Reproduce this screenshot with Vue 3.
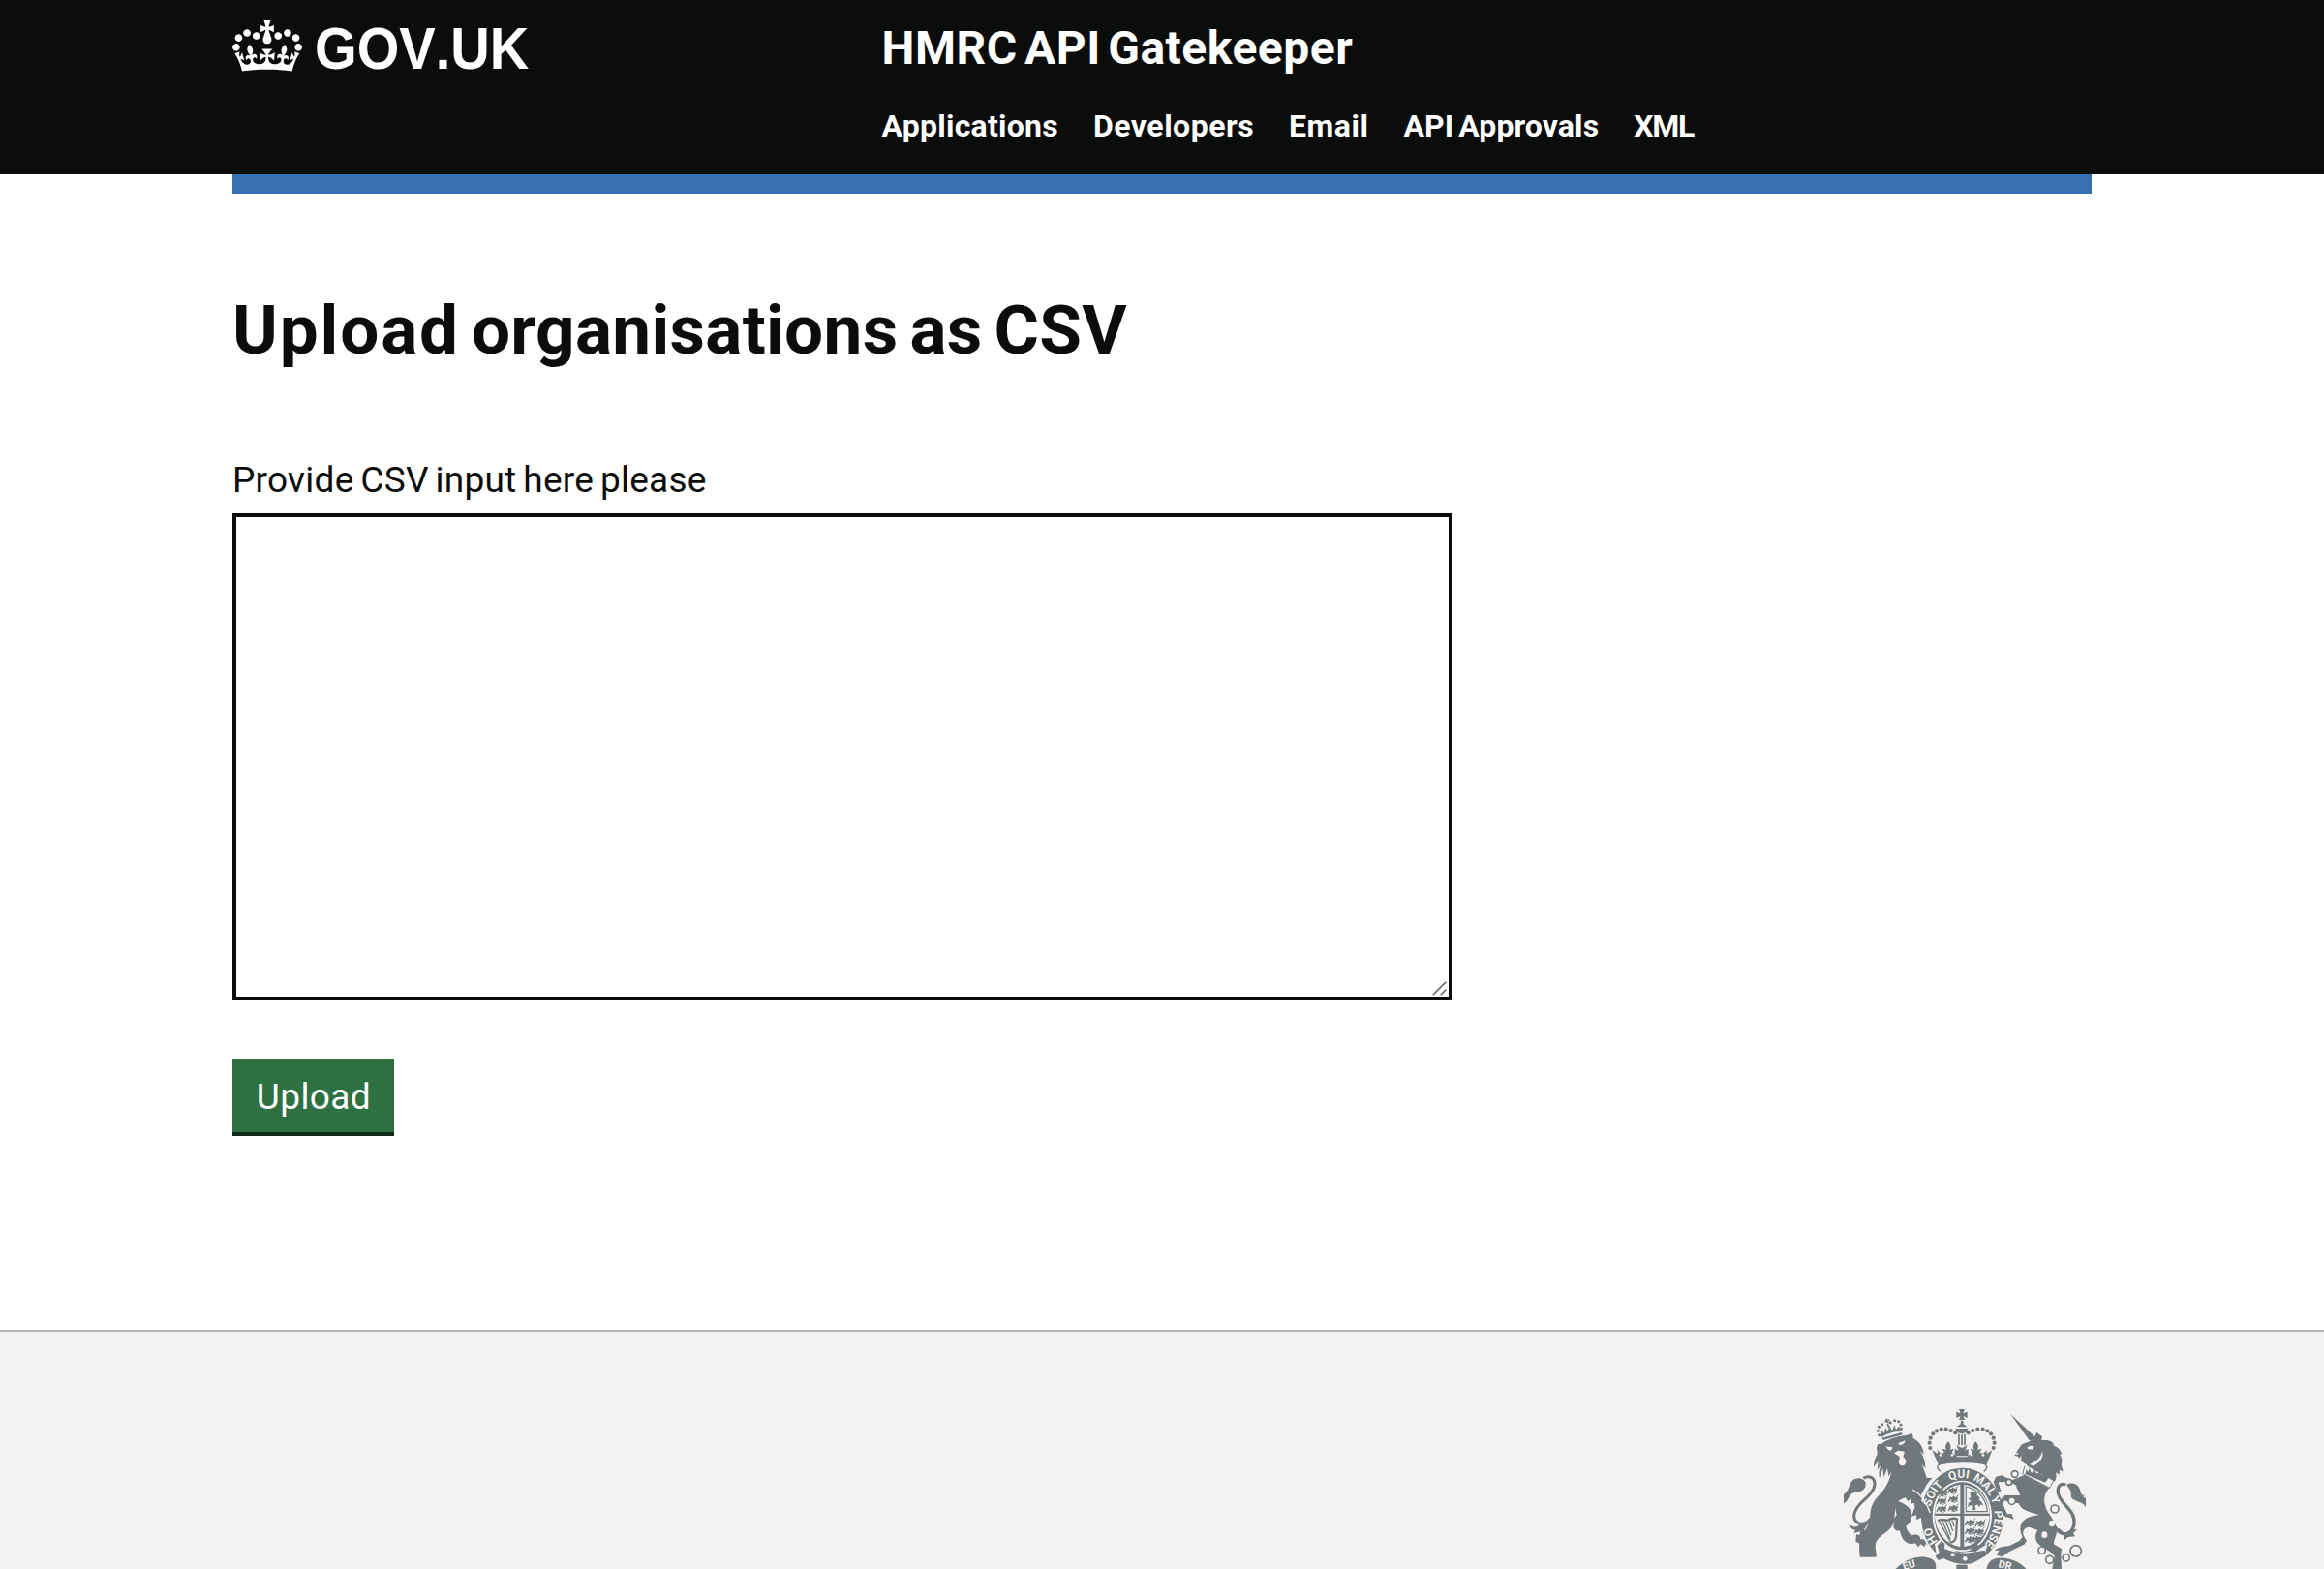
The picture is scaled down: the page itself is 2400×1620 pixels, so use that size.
<script setup>
const navigation = ['Applications', 'Developers', 'Email', 'API Approvals', 'XML']

const motto = [
  { word: 'HO', at: '16.5%' },
  { word: 'SOIT', at: '35%' },
  { word: 'QUI', at: '48.6%' },
  { word: 'MAL', at: '60.2%' },
  { word: 'Y', at: '68%' },
  { word: 'PENSE', at: '80.5%' },
]

const crownPearls = [
  [40, 135], [38, 119], [41, 104], [49, 91], [60, 82], [74, 77], [89, 77], [104, 81], [118, 88],
  [158, 88], [172, 81], [187, 77], [203, 77], [217, 82], [228, 91], [236, 104], [239, 119], [236, 135],
]

const lionPearls = [[152, 365], [148, 352], [151, 340], [161, 332], [186, 326], [200, 320], [212, 323], [219, 333], [220, 346]]

const passant = [[66, 264], [96, 256], [62, 289], [98, 283], [62, 313], [98, 311], [150, 356], [182, 358], [150, 382], [178, 384], [150, 408], [170, 407]]
</script>

<template>
  <div class="page">
    <header class="header">
      <div class="container header-row">
        <a class="logo">
          <svg class="crown" viewBox="0 0 132 97" aria-hidden="true">
            <path d="M25 30.2c3.5 1.5 7.7-.2 9.1-3.7 1.5-3.6-.2-7.8-3.9-9.2-3.6-1.4-7.6.3-9.1 3.9-1.4 3.5.3 7.5 3.9 9zM9 39.5c3.6 1.5 7.8-.2 9.2-3.7 1.5-3.6-.2-7.8-3.9-9.1-3.6-1.5-7.6.2-9.1 3.8-1.4 3.5.3 7.5 3.8 9zM4.4 57.2c3.5 1.5 7.7-.2 9.1-3.8 1.5-3.6-.2-7.7-3.9-9.1-3.5-1.5-7.6.3-9.1 3.8-1.4 3.5.3 7.6 3.9 9.1zm38.3-21.4c3.5 1.5 7.7-.2 9.1-3.8 1.5-3.6-.2-7.7-3.9-9.1-3.6-1.5-7.6.3-9.1 3.8-1.3 3.6.4 7.7 3.9 9.1zm64.4-5.6c-3.6 1.5-7.8-.2-9.1-3.7-1.5-3.6.2-7.8 3.8-9.2 3.6-1.4 7.7.3 9.2 3.9 1.3 3.5-.4 7.5-3.9 9zm15.9 9.3c-3.6 1.5-7.7-.2-9.1-3.7-1.5-3.6.2-7.8 3.7-9.1 3.6-1.5 7.7.2 9.2 3.8 1.5 3.5-.3 7.5-3.8 9zm4.7 17.7c-3.6 1.5-7.8-.2-9.2-3.8-1.5-3.6.2-7.7 3.9-9.1 3.6-1.5 7.7.3 9.2 3.8 1.3 3.5-.4 7.6-3.9 9.1zM89.3 35.8c-3.6 1.5-7.8-.2-9.2-3.8-1.4-3.6.2-7.7 3.9-9.1 3.6-1.5 7.7.3 9.2 3.8 1.4 3.6-.3 7.7-3.9 9.1zM69.7 17.7l8.9 4.7V9.3l-8.9 2.8c-.2-.3-.5-.6-.9-.9L72.4 0H59.6l3.5 11.2c-.3.3-.6.5-.9.9l-8.8-2.8v13.1l8.8-4.7c.3.3.6.7.9.9l-5 15.4v.1c-.2.8-.4 1.6-.4 2.4 0 4.1 3.1 7.5 7 8.1h.2c.3 0 .7.1 1 .1.4 0 .7 0 1-.1h.2c4-.6 7.1-4.1 7.1-8.1 0-.8-.1-1.7-.4-2.4V34l-5.1-15.4c.4-.2.7-.6 1-.9zM66 92.8c16.9 0 32.8 1.1 47.1 3.2 4-16.9 8.9-26.7 14-33.5l-9.6-3.4c1 4.9 1.1 7.2 0 10.2-1.5-1.4-3-4.3-4.2-8.7L108.6 76c2.8-2 5-3.2 7.5-3.3-4.4 9.4-10 11.9-13.6 11.2-4.3-.8-6.3-4.6-5.6-7.9 1-4.7 5.7-5.9 8-.5 4.3-8.7-3-11.4-7.6-8.8 7.1-7.2 7.9-13.5 2.1-21.1-8 6.1-8.1 12.3-4.5 20.8-4.7-5.4-12.1-2.5-9.5 6.2 3.4-5.2 7.9-2 7.2 3.1-.6 4.3-6.4 7.8-13.5 7.2-10.3-.9-10.9-8-11.2-13.8 2.5-.5 7.1 1.8 11 7.3L80.2 60c-4.1 4.4-8 5.3-12.3 5.4 1.4-4.4 8-11.6 8-11.6H55.5s6.4 7.2 7.9 11.6c-4.2-.1-8-1-12.3-5.4l1.4 16.4c3.9-5.5 8.5-7.7 10.9-7.3-.3 5.8-.9 12.8-11.1 13.8-7.2.6-12.9-2.9-13.5-7.2-.7-5 3.8-8.3 7.1-3.1 2.7-8.7-4.6-11.6-9.4-6.2 3.7-8.5 3.6-14.7-4.6-20.8-5.8 7.6-5 13.9 2.2 21.1-4.7-2.6-11.9.1-7.7 8.8 2.3-5.5 7.1-4.2 8.1.5.7 3.3-1.3 7.1-5.7 7.9-3.5.7-9-1.8-13.5-11.2 2.5.1 4.7 1.3 7.5 3.3l-4.7-15.4c-1.2 4.4-2.7 7.2-4.3 8.7-1.1-3-.9-5.3 0-10.2l-9.5 3.4c5 6.9 9.9 16.7 14 33.5 14.8-2.1 30.8-3.2 47.7-3.2z" />
          </svg>
          <span class="logo-text">GOV.UK</span>
        </a>
        <div class="header-content">
          <a class="service-name">HMRC API Gatekeeper</a>
          <nav>
            <ul class="nav-list">
              <li v-for="item in navigation" :key="item"><a>{{ item }}</a></li>
            </ul>
          </nav>
        </div>
      </div>
    </header>

    <div class="container">
      <div class="header-bar"></div>
      <main class="main">
        <h1><span class="lead">Upload</span> organisations as CSV</h1>
        <form @submit.prevent>
          <label for="csv-input">Provide CSV input here please</label>
          <div class="field">
            <textarea id="csv-input" name="csv"></textarea>
            <svg class="grip" viewBox="0 0 15 15" aria-hidden="true">
              <path d="M.7 14.3 14.3.7M8.7 14.3l5.6-5.6" />
            </svg>
          </div>
          <button type="submit">Upload</button>
        </form>
      </main>
    </div>

    <footer class="footer">
      <div class="container footer-row">
        <svg class="arms" viewBox="0 0 260 170" aria-hidden="true">
          <!-- Lion supporter -->
          <g transform="translate(-10 -90) scale(.33333)">
            <circle v-for="([x, y], i) in lionPearls" :key="i" :cx="x" :cy="y" r="4.6" />
            <path d="M174 314l4 14M169 323l15-5M178 330l4 12" class="line" stroke-width="5" />
            <path d="M156 366l4-16 8 10 3-17 8 11 5-18 8 15 8-17 4 15 10-12 5 17c-22 0-42 6-59 17zM160 374l62-17 2 7-60 17z" />
            <path d="M144 404l4-11 11-1c18-13 48-24 76-26l20-6 2 15c17 8 32 25 33 50l-13-11c13 16 19 35 18 54l-11-12c6 14 11 28 15 41l18 2c-9 7-15 14-20 24l-16 28c16 17 30 38 34 62l7 20-9-6-1 14-7-11-9 11-3-15-12 5 1-12-16 6 6-16-12-5 14-7-14-13 1-9-10 3-2-14-9 6-6-11c-9 3-16 4-23 12 26 8 43 25 42 42-1 18-8 29-18 34 3 14 9 23 18 29 9-4 18-3 24 2l3 10c9-2 17 1 22 8l3 12-10-6-3 10-11-9-8 9-9-12c-11 4-22 2-31-5-12-9-13-21-18-34-10 2-18-4-19-14l2-22 8-14c-4-9-4-21-1-32-5 18-4 38-8 55-4 16-14 27-31 37-20 14-29 27-25 48l2 14v10H92c-1-13-3-33-1-42l-12-6 2-22 10 2 3-17 14 2c10-13 15-31 16-49 2-29 13-45 34-67 16-18 27-39 31-65l-8 14-4-25-11 28-3-28-10 30c-4-18 0-31 7-43l-14 18 3-27-14 18c0-16 3-27 11-39z" />
            <path d="M51 570c10-18 14-27 30-28 20-2 29-10 29-26 0-14-19-22-34-15-20 9-11 29-34 49v27z" />
            <path d="M103 499c17-10 35-3 35 17 0 24-26 43-43 60-20 21-27 43-15 56 8 10 24 12 35 3l27-27" class="line" stroke-width="9" />
            <path d="M58 640c8 9 17 11 27 8l12-13 24-2-17 28-31 8 5-10c-9 0-17-7-20-19z" />
            <path class="gap" d="M173 400l21 3-4 9c-8 2-13-1-17-12zM211 390l22-8c-2 9-8 14-18 15zM198 421l12-8 21 3-5 15 9 12c1 11-5 17-12 17-8 0-12-8-10-16l3-11z" />
          </g>

          <!-- Crown, garter and shield -->
          <g transform="translate(80 0) scale(.33333)">
            <ellipse class="gap" cx="139" cy="346" rx="133" ry="155" />
            <path fill-rule="evenodd" d="M139 197a127 149 0 1 0 .1 0zM139 236a92 110 0 1 1-.1 0z" />
            <path id="garter" d="M139 466a100 119 0 0 1 0-238 100 119 0 0 1 0 238" fill="none" />
            <text v-for="m in motto" :key="m.word" class="motto">
              <textPath href="#garter" :startOffset="m.at">{{ m.word }}</textPath>
            </text>
            <path fill-rule="evenodd" d="M139 241a86 105 0 1 0 .1 0zM133 249v89H55c2-46 32-84 78-89zM145 249c45 5 76 42 79 89h-79zM54 345h79v96c-43-6-75-42-79-96zM145 345h79c-3 52-34 89-79 96z" />

            <g v-for="([x, y], i) in passant" :key="i" :transform="`translate(${x} ${y})`">
              <path d="M3 3l7 3 4-6 6 5 7-2 1 8-5 2 6 5-7 1-5-4-4 5-8 0 5-4-3-4-5 3-1 5-5-2 5-8z" />
              <path d="M2 14l6 0M25 2l5-5M12 20l8 1" class="line" stroke-width="3" />
            </g>
            <path d="M151 255v77h66c-2-37-27-68-66-77z" class="line" stroke-width="3.5" />
            <path d="M163 274l9-6 6 6 7-1 0 9 10 8-5 5 9 7 6 13-8-5-5 8-6-8-8 5 4 12-12-1 4-7-8-8-9 8 1-13 9-7-9-6 8-6z" />
            <path d="M64 361c10-10 21 1 31-3 10-3 15-8 28-3l-3 55c-2 11-9 18-19 18" class="line" stroke-width="7" />
            <path d="M66 360l37 66M77 361l25 57M88 362l17 44M99 361l11 31M108 360l6 18" class="line" stroke-width="4" />

            <!-- Buckle and lower strap -->
            <path class="gap" d="M54 433l16-14 18 16 38 24 49-4 43-22-13 46-50 24-67-9-27-20z" />
            <path d="M62 437l13-13 10 8-1 15c29 11 57 17 82 12l43-7 4 17-43 24c-32 5-68-3-88-16l-17 6-9-12 12-13z" />
            <g class="gap"><circle cx="110" cy="466" r="6" /><circle cx="148" cy="478" r="7" /></g>
            <path d="M163 449l20-17 15 11-18 14z" />
            <path d="M121 497h34v13h-34z" />

            <!-- Lion's forepaw resting on the garter -->
            <path class="gap" d="M-12 250l38 40-12 32z" opacity="0" />
            <path d="M2 292c14 8 26 22 34 40l9 22-10-5-2 15-8-9-9 12-4-16-14 6 0-14-16 4 6-16z" />
            <path d="M-14 264c24 14 42 38 54 72" class="cut" />

            <!-- Imperial crown -->
            <path d="M68 186c-10 8-4 16 4 22M210 186c10 8 4 16-4 22" class="line" stroke-width="4" />
            <circle v-for="([x, y], i) in crownPearls" :key="i" :cx="x" :cy="y" r="6.3" />
            <path d="M129 15h18l-5 13 13-5v19l-13-6 5 12h-18l5-12-13 6V23l13 5zM135 50h7l1 11 12 9H121l13-9zM118 75h40c-4 13-12 15-20 15s-16-2-20-15z" />
            <path d="M129 92v34M138 92v34M147 92v34" class="line" stroke-width="5" />
            <path d="M121 126l17 9 17-9-7 16 10-4v22H116v-22l12 5z" />
            <path d="M46 142l17 11-1-11 11 10 11-3-8-12 14 4c-6-11-1-18 6-26 7 8 10 16 5 26l12-4-6 13 18 13h28l17-13-6-13 12 4c-5-10-2-18 5-26 7 8 11 15 5 26l14-4-7 12 11 3 11-10 0 11 17-11-18 46c-45-10-107-10-148 0z" />
            <g class="gap"><circle cx="72" cy="157" r="4" /><circle cx="108" cy="157" r="4" /><circle cx="168" cy="157" r="4" /><circle cx="204" cy="157" r="4" /></g>
          </g>

          <!-- Unicorn supporter -->
          <g transform="translate(120 -90) scale(.33333)">
            <path d="M168 299l84 78-15 9-11-6z" />
            <path d="M181 429l10-17 13-18 34-13 12-24 17 13-2 12c24-4 35 4 39 13l-9-1c20 8 31 18 33 32l-7-3c8 16 9 24 5 34l6 21-12-5 1 15-12-7c3 12 2 20-4 28l-84-48-4-6-5-1-11-11 2-14-8 8-3-6z" />
            <path d="M211 489l80 37-12 16c-8 18-8 37 5 60 13 20 25 33 27 55 3 19-8 29-8 46l24 14-2 24 2 39h-29l7-39c-4-14-28-21-48-37-14-12-13-32-4-44l-22-8c-11-3-21 2-23 13-2 9 4 17 11 28l-8 11-46 22-22 16-18-5 9-15-16 0c15-10 31-13 48-14l30-15 10-13c-14-27-6-51 22-61 10-4 20-5 29-7-29-8-55-13-63-35l-28-4-17-5-3 14 13 28 14-1 6 18-16-7-12-2-20-30 5-22 16-14 46 0c-2-14-10-18-12-31-11-6-25-14-35-11l-20 1 8 28-11 1-12-29 8-17 17-4 33 15z" />
            <g class="gap">
              <path d="M213 461l88 47-10 22-82-43z" />
              <path d="M219 404l11-6 13 2-7 10-12-1zM267 414c6 22-6 34-27 47l-12-5c20-9 36-20 39-42zM181 423l12-4-3 8z" />
            </g>
            <path d="M213 461l-7 24 84 44 11-21" class="line" stroke-width="3" />
            <path d="M214 486l4-14 7 8 0-14 9 16 8-4 0-10 7 16 8-2 1-10 6 16 8-2 2-8 5 14 7 2-3 10-7 8z" />
            <path d="M340 519c-22-8-31 15-19 38 13 27 49 46 45 82-2 21-16 35-33 32-16-2-29-22-40-38" class="line" stroke-width="10" />
            <path d="M342 518c16-8 36-3 41 14 6 17 3 21 19 29v27c-10-15-23-14-38-23-13-8-4-17-10-29zM382 545l19 9-20-2zM335 668l20-9 21-2-13 12 6 10-22 2-10 9-4-14-21-18 7-4z" />
            <g class="link">
              <circle cx="182" cy="486" r="10" /><circle cx="164" cy="511" r="9" /><circle cx="173" cy="569" r="11" />
              <circle cx="306" cy="594" r="12" /><circle cx="266" cy="722" r="11" /><circle cx="290" cy="751" r="12" />
              <circle cx="341" cy="745" r="11" /><circle cx="371" cy="724" r="17" />
            </g>
            <g class="gap"><ellipse cx="297" cy="639" rx="9" ry="10" /><ellipse cx="274" cy="674" rx="9" ry="10" /></g>
          </g>

          <!-- Scrolls -->
          <g transform="translate(-10 -90) scale(.33333)">
            <path d="M195 790c24-36 78-58 115-43 17 7 20 20 16 43z" />
            <text class="motto scroll" transform="translate(229 784) rotate(-18)">EU</text>
          </g>
          <g transform="translate(120 -90) scale(.33333)">
            <path d="M94 784c2-30 25-44 62-37 31 6 55 21 68 43z" />
            <text class="motto scroll" transform="translate(130 774) rotate(12)">DR</text>
          </g>
        </svg>
      </div>
    </footer>
  </div>
</template>

<style>
body {
  margin: 0;
  background: #fff;
}
</style>

<style scoped>
.page {
  display: flex;
  flex-direction: column;
  height: 1620px;
  overflow: hidden;
  color: #0b0c0c;
  font-family: Roboto, "Liberation Sans", sans-serif;
}

.container {
  width: 1920px;
  margin: 0 auto;
}

.header {
  height: 180px;
  background: #0b0c0c;
  color: #fff;
}

.header-row {
  display: grid;
  grid-template-columns: 670.5px 1fr;
  padding-top: 18px;
}

.logo {
  display: flex;
  align-items: flex-start;
}

.crown {
  width: 72px;
  height: 53px;
  margin-top: 3px;
  fill: currentColor;
}

.logo-text {
  margin: 2px 0 0 13px;
  font: bold 61px/60px "Liberation Sans", Arial, sans-serif;
  font-kerning: none;
  transform: scaleX(0.92);
  transform-origin: left;
}

.header-content {
  display: flex;
  flex-direction: column;
}

.service-name {
  font-size: 48px;
  font-weight: 700;
  line-height: 63px;
  letter-spacing: 0.5px;
  word-spacing: -5px;
}

.nav-list {
  display: flex;
  gap: 36px;
  margin: 29px 0 0;
  padding: 0;
  list-style: none;
  font-size: 32px;
  font-weight: 700;
  line-height: 40px;
}

.nav-list li:nth-child(1) {
  letter-spacing: 0.25px;
}

.nav-list li:nth-child(2),
.nav-list li:nth-child(3) {
  letter-spacing: 0.5px;
}

.nav-list li:nth-child(4) {
  letter-spacing: 0.1px;
  word-spacing: -3px;
}

.nav-list li:nth-child(5) {
  letter-spacing: -1.3px;
}

.header-bar {
  height: 20px;
  background: #366fb2;
}

.main {
  height: 1173px;
}

h1 {
  margin: 0;
  padding-top: 101px;
  font-size: 71px;
  font-weight: 700;
  line-height: 80px;
  letter-spacing: 0.33px;
  word-spacing: -6px;
}

.lead {
  letter-spacing: 1.9px;
}

form {
  display: flex;
  flex-direction: column;
  align-items: flex-start;
}

label {
  margin: 90px 0 9px;
  font-size: 37px;
  line-height: 50px;
  letter-spacing: 0.25px;
  word-spacing: -2.6px;
}

.field {
  position: relative;
  width: 1260px;
  height: 503px;
}

textarea {
  display: block;
  box-sizing: border-box;
  width: 100%;
  height: 100%;
  margin: 0;
  padding: 10px;
  border: 4px solid #0b0c0c;
  border-radius: 0;
  background: #fff;
  font: inherit;
  resize: none;
}

.grip {
  position: absolute;
  right: 6px;
  bottom: 5px;
  width: 15px;
  height: 15px;
  fill: none;
  stroke: #666;
  stroke-width: 1.6;
}

button {
  width: 167px;
  height: 76px;
  margin: 60px 0 0;
  padding: 3px 0 0 1px;
  border: 0;
  border-radius: 0;
  background: #2d7041;
  box-shadow: 0 4px 0 #0e2d1a;
  color: #fff;
  font: 37px/50px Roboto, "Liberation Sans", sans-serif;
  letter-spacing: 0.4px;
}

.footer {
  flex: 1;
  border-top: 2px solid #b3b4b6;
  background: #f3f2f1;
}

.footer-row {
  display: flex;
  justify-content: flex-end;
  padding-top: 75px;
}

.arms {
  width: 260px;
  height: 170px;
  fill: #70787b;
}

.line {
  fill: none;
  stroke: #70787b;
}

.gap {
  fill: #f3f2f1;
}

.cut {
  fill: none;
  stroke: #f3f2f1;
  stroke-width: 4;
}

.link {
  fill: #f3f2f1;
  stroke: #70787b;
  stroke-width: 5;
}

.motto {
  fill: #f3f2f1;
  font: bold 36px Roboto, "Liberation Sans", sans-serif;
  text-anchor: middle;
}

.scroll {
  font-size: 32px;
  text-anchor: start;
}
</style>
